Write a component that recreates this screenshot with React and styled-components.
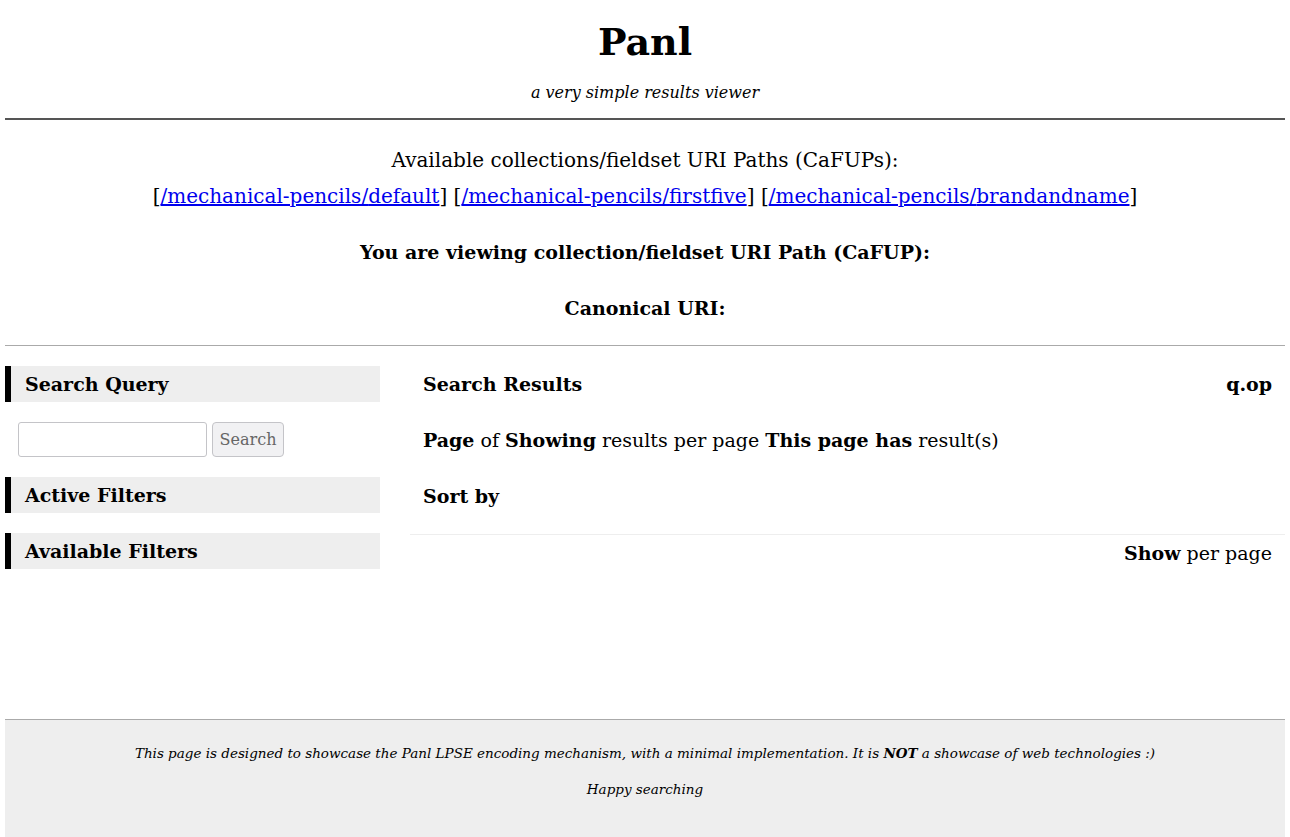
import React from 'react';
import styled, { createGlobalStyle } from 'styled-components';

const GlobalStyle = createGlobalStyle`
    body {
        margin: 0;
        padding: 0 5px 2px;
        font-family: "DejaVu Serif", "Liberation Serif", serif;
        font-size: 20px;
        color: #000;
        background: #fff;
    }
`;

const Header = styled.header`
    text-align: center;
    border-bottom: 2px solid #555;
`;

const Title = styled.h1`
    margin: 0;
    padding-top: 14px;
    font-size: 38px;
    line-height: 56px;
`;

const Subtitle = styled.p`
    margin: 0;
    padding: 11px 0 13px;
    font-style: italic;
    font-size: 16px;
    line-height: 24px;
`;

const Paths = styled.section`
    text-align: center;
    padding: 22px 0 19px;
    border-bottom: 1px solid #aaa;
`;

const PathLine = styled.p`
    margin: 0;
    line-height: 36px;
`;

const PathLink = styled.a`
    color: #0000ee;
    font-family: inherit;
    text-decoration: underline;
`;

const Info = styled.p`
    margin: 20px 0 0;
    font-weight: bold;
    font-size: 19px;
    line-height: 36px;
`;

const Main = styled.main`
    display: flex;
    gap: 30px;
    padding-top: 20px;
    min-height: 353px;
`;

const Sidebar = styled.aside`
    width: 375px;
    flex-shrink: 0;
`;

const SideHeading = styled.h2`
    margin: 0 0 20px;
    padding: 0 0 0 14px;
    height: 36px;
    line-height: 36px;
    font-size: 19px;
    background: #eee;
    border-left: 6px solid #000;
`;

const SearchForm = styled.form`
    display: flex;
    gap: 5px;
    padding-left: 13px;
    margin: 1px 0 20px;
`;

const SearchInput = styled.input`
    width: 189px;
    height: 35px;
    box-sizing: border-box;
    border: 1px solid #c4c4c8;
    border-radius: 3px;
`;

const SearchButton = styled.button`
    height: 35px;
    width: 72px;
    padding: 0;
    font-family: inherit;
    font-size: 16px;
    color: #666;
    background: #f1f1f3;
    border: 1px solid #c4c4c8;
    border-radius: 4px;
`;

const Results = styled.section`
    flex: 1;
    font-size: 19px;
`;

const ResultRow = styled.div`
    display: flex;
    justify-content: ${(p) => p.$justify || 'space-between'};
    padding: 0 13px;
    height: 36px;
    line-height: 36px;
    margin-bottom: 20px;
`;

const ShowRow = styled(ResultRow)`
    border-top: 1px solid #eee;
    margin-top: 0;
`;

const Footer = styled.footer`
    background: #eee;
    border-top: 1px solid #aaa;
    text-align: center;
    font-style: italic;
    font-size: 13.5px;
    padding: 22px 0 24px;
`;

const FooterLine = styled.p`
    margin: 0 0 14px;
    line-height: 22px;
`;

const App = () => {
    const paths = ['default', 'firstfive', 'brandandname'];

    return (
        <>
            <GlobalStyle />
            <Header>
                <Title>Panl</Title>
                <Subtitle>a very simple results viewer</Subtitle>
            </Header>

            <Paths>
                <PathLine>Available collections/fieldset URI Paths (CaFUPs):</PathLine>
                <PathLine>
                    {paths.map((p, i) => (
                        <React.Fragment key={p}>
                            {i > 0 && ' '}[<PathLink href="#">/mechanical-pencils/{p}</PathLink>]
                        </React.Fragment>
                    ))}
                </PathLine>
                <Info>You are viewing collection/fieldset URI Path (CaFUP):</Info>
                <Info>Canonical URI:</Info>
            </Paths>

            <Main>
                <Sidebar>
                    <SideHeading>Search Query</SideHeading>
                    <SearchForm onSubmit={(e) => e.preventDefault()}>
                        <SearchInput type="text" />
                        <SearchButton type="submit">Search</SearchButton>
                    </SearchForm>
                    <SideHeading>Active Filters</SideHeading>
                    <SideHeading>Available Filters</SideHeading>
                </Sidebar>

                <Results>
                    <ResultRow>
                        <strong>Search Results</strong>
                        <strong>q.op</strong>
                    </ResultRow>
                    <ResultRow $justify="flex-start">
                        <span><strong>Page</strong> of <strong>Showing</strong> results per page <strong>This page has</strong> result(s)</span>
                    </ResultRow>
                    <ResultRow $justify="flex-start">
                        <strong>Sort by</strong>
                    </ResultRow>
                    <ShowRow $justify="flex-end">
                        <span><strong>Show</strong> per page</span>
                    </ShowRow>
                </Results>
            </Main>

            <Footer>
                <FooterLine>This page is designed to showcase the Panl LPSE encoding mechanism, with a minimal implementation. It is <strong>NOT</strong> a showcase of web technologies :)</FooterLine>
                <FooterLine>Happy searching</FooterLine>
            </Footer>
        </>
    );
};

export default App;
